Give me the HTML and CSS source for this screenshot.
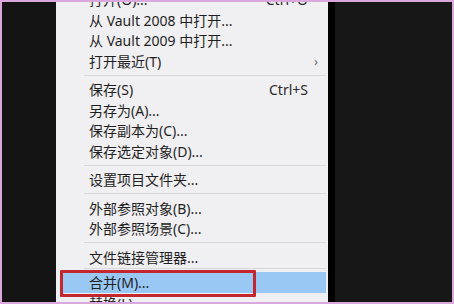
FILE: index.html
```html
<!DOCTYPE html>
<html lang="zh-CN">
<head>
  <meta charset="UTF-8" />
  <meta name="viewport" content="width=device-width, initial-scale=1" />
  <title>文件菜单</title>
  <link rel="stylesheet" href="styles.css">
</head>
<body>
  <div class="screen">
    <div class="side-left"></div>

    <ul class="menu">
      <li class="item"><span>打开(O)...</span><span class="key">Ctrl+O</span></li>
      <li class="item"><span>从 Vault 2008 中打开...</span></li>
      <li class="item"><span>从 Vault 2009 中打开...</span></li>
      <li class="item"><span>打开最近(T)</span><span class="key"></span><span class="arrow">&#x203A;</span></li>
      <li class="sep"></li>
      <li class="item"><span>保存(S)</span><span class="key">Ctrl+S</span></li>
      <li class="item"><span>另存为(A)...</span></li>
      <li class="item"><span>保存副本为(C)...</span></li>
      <li class="item"><span>保存选定对象(D)...</span></li>
      <li class="sep"></li>
      <li class="item"><span>设置项目文件夹...</span></li>
      <li class="sep"></li>
      <li class="item"><span>外部参照对象(B)...</span></li>
      <li class="item"><span>外部参照场景(C)...</span></li>
      <li class="sep"></li>
      <li class="item"><span>文件链接管理器...</span></li>
      <li class="sep sep-tight"></li>
      <li class="item active"><span>合并(M)...</span><span class="mark"></span></li>
      <li class="item"><span>替换(L)...</span></li>
    </ul>

    <div class="edge"></div>
    <div class="side-right"></div>
  </div>
</body>
</html>
```

FILE: styles.css
```css
html {
  background: #dba8de;
}
body {
  margin: 0;
  padding: 2px;
  height: 300px;
  overflow: hidden;
  font-family: "Noto Sans", "Noto Sans CJK SC", sans-serif;
  font-size: 14px;
  color: #1f1f1f;
}
.screen {
  display: flex;
  height: 300px;
  overflow: hidden;
}
.side-left {
  width: 54px;
  background: #141414;
}
.menu {
  width: 272px;
  margin: 0;
  padding: 0;
  list-style: none;
  background: #f0eff2;
  overflow: hidden;
}
.menu .item:first-child {
  margin-top: -13px;
}
.item {
  position: relative;
  display: grid;
  grid-template-columns: 1fr auto 16px;
  align-items: center;
  height: 20.5px;
  margin: 0 2px 0 4px;
  padding: 0 2px 0 29px;
  white-space: nowrap;
}
.key {
  grid-column: 2;
  color: #2a2a2a;
}
.arrow {
  grid-column: 3;
  text-align: center;
  color: #6a6a6a;
  font-size: 13px;
}
.sep {
  height: 1px;
  margin: 3.5px 2px 3.5px 28px;
  background: #d9d8db;
}
.sep-tight {
  margin-top: 0.5px;
}
.item.active {
  background: #99c8f4;
}
.mark {
  position: absolute;
  left: 0;
  top: -2px;
  bottom: -4px;
  width: 196px;
  border: 3px solid #c3262e;
  border-radius: 1px;
  box-sizing: border-box;
}
.edge {
  width: 7px;
  background: #000;
}
.side-right {
  flex: 1;
  background: #171717;
}
```
